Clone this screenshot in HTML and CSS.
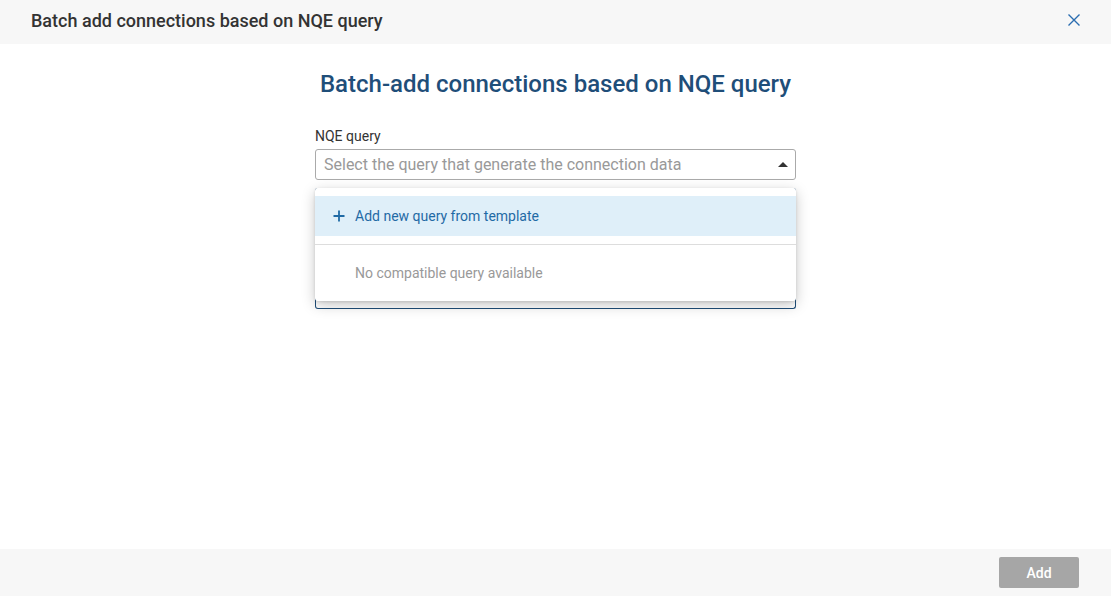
FILE: index.html
```html
<!DOCTYPE html>
<html>
<head>
<meta charset="utf-8">
<link rel="stylesheet" href="styles.css">
</head>
<body>
<div class="dialog">
  <header class="head">
    <span class="head-title">Batch add connections based on NQE query</span>
    <svg class="close" width="14" height="14" viewBox="0 0 14 14"><path d="M1.5 1.5 L12.5 12.5 M12.5 1.5 L1.5 12.5" stroke="#2a6db0" stroke-width="1.4" fill="none"/></svg>
  </header>
  <main class="body">
    <h1 class="heading">Batch-add connections based on NQE query</h1>
    <div class="form">
      <label class="label">NQE query</label>
      <div class="select">
        <span class="placeholder">Select the query that generate the connection data</span>
        <span class="caret"></span>
      </div>
      <div class="field-wrap">
        <div class="behind"></div>
        <div class="menu">
          <div class="menu-item active">
            <svg class="plus" width="12" height="12" viewBox="0 0 12 12"><path d="M6 0.5 V11.5 M0.5 6 H11.5" stroke="#1f6aa5" stroke-width="1.8" fill="none"/></svg>
            <span>Add new query from template</span>
          </div>
          <div class="divider"></div>
          <div class="menu-empty">No compatible query available</div>
        </div>
      </div>
    </div>
  </main>
  <footer class="foot">
    <button class="add">Add</button>
  </footer>
</div>
</body>
</html>
```
FILE: styles.css
```css
* { box-sizing: border-box; }
html, body { margin: 0; padding: 0; }
body {
  width: 1111px;
  height: 596px;
  font-family: Roboto, "Liberation Sans", sans-serif;
  background: #fff;
  overflow: hidden;
}
.dialog {
  display: flex;
  flex-direction: column;
  height: 596px;
}
.head {
  height: 44px;
  background: #f7f7f7;
  display: flex;
  align-items: center;
  justify-content: space-between;
  padding: 0 31px 0 31px;
  flex-shrink: 0;
}
.head-title {
  font-size: 18px;
  color: #333;
  font-weight: 500;
  position: relative;
  top: -2px;
}
.close { margin-right: -1px; position: relative; top: -2px; }
.body {
  flex: 1;
  display: flex;
  flex-direction: column;
  align-items: center;
}
.heading {
  margin: 26px 0 0 0;
  font-size: 24px;
  line-height: 28px;
  font-weight: 500;
  color: #1f4e79;
}
.form {
  width: 481px;
  margin-top: 30px;
  display: flex;
  flex-direction: column;
}
.label {
  font-size: 14px;
  line-height: 16px;
  color: #333;
}
.select {
  margin-top: 5px;
  height: 31px;
  border: 1px solid #aaa;
  border-radius: 3px;
  display: flex;
  align-items: center;
  justify-content: space-between;
  padding: 0 8px 0 8px;
}
.placeholder {
  font-size: 16px;
  color: #999;
}
.caret {
  width: 0; height: 0;
  border-left: 5px solid transparent;
  border-right: 5px solid transparent;
  border-bottom: 5px solid #333;
  margin-right: -1px;
}
.field-wrap {
  position: relative;
  margin-top: 8px;
}
.behind {
  height: 121px;
  border: 1px solid #1f4e79;
  border-top: none;
  border-radius: 3px;
}
.menu {
  position: absolute;
  top: 0;
  left: 0;
  right: 0;
  height: 113px;
  background: #fff;
  border-radius: 3px;
  box-shadow: 0 4px 14px rgba(0,0,0,0.22), 0 1px 3px rgba(0,0,0,0.12);
  padding-top: 8px;
}
.menu-item {
  height: 40px;
  display: flex;
  align-items: center;
  padding-left: 18px;
  font-size: 14px;
  color: #1f6aa5;
}
.menu-item.active { background: #dfeff9; }
.plus { margin-right: 10px; }
.divider {
  height: 1px;
  background: #ddd;
  margin-top: 8px;
}
.menu-empty {
  height: 56px;
  display: flex;
  align-items: center;
  padding-left: 40px;
  font-size: 14px;
  color: #999;
}
.foot {
  height: 47px;
  background: #f7f7f7;
  display: flex;
  align-items: flex-start;
  justify-content: flex-end;
  padding: 8px 32px 0 0;
  flex-shrink: 0;
}
.add {
  width: 80px;
  height: 31px;
  background: #a6a6a6;
  color: #fff;
  border: none;
  border-radius: 2px;
  font-family: Roboto, "Liberation Sans", sans-serif;
  font-size: 14px;
  font-weight: 500;
}
```
